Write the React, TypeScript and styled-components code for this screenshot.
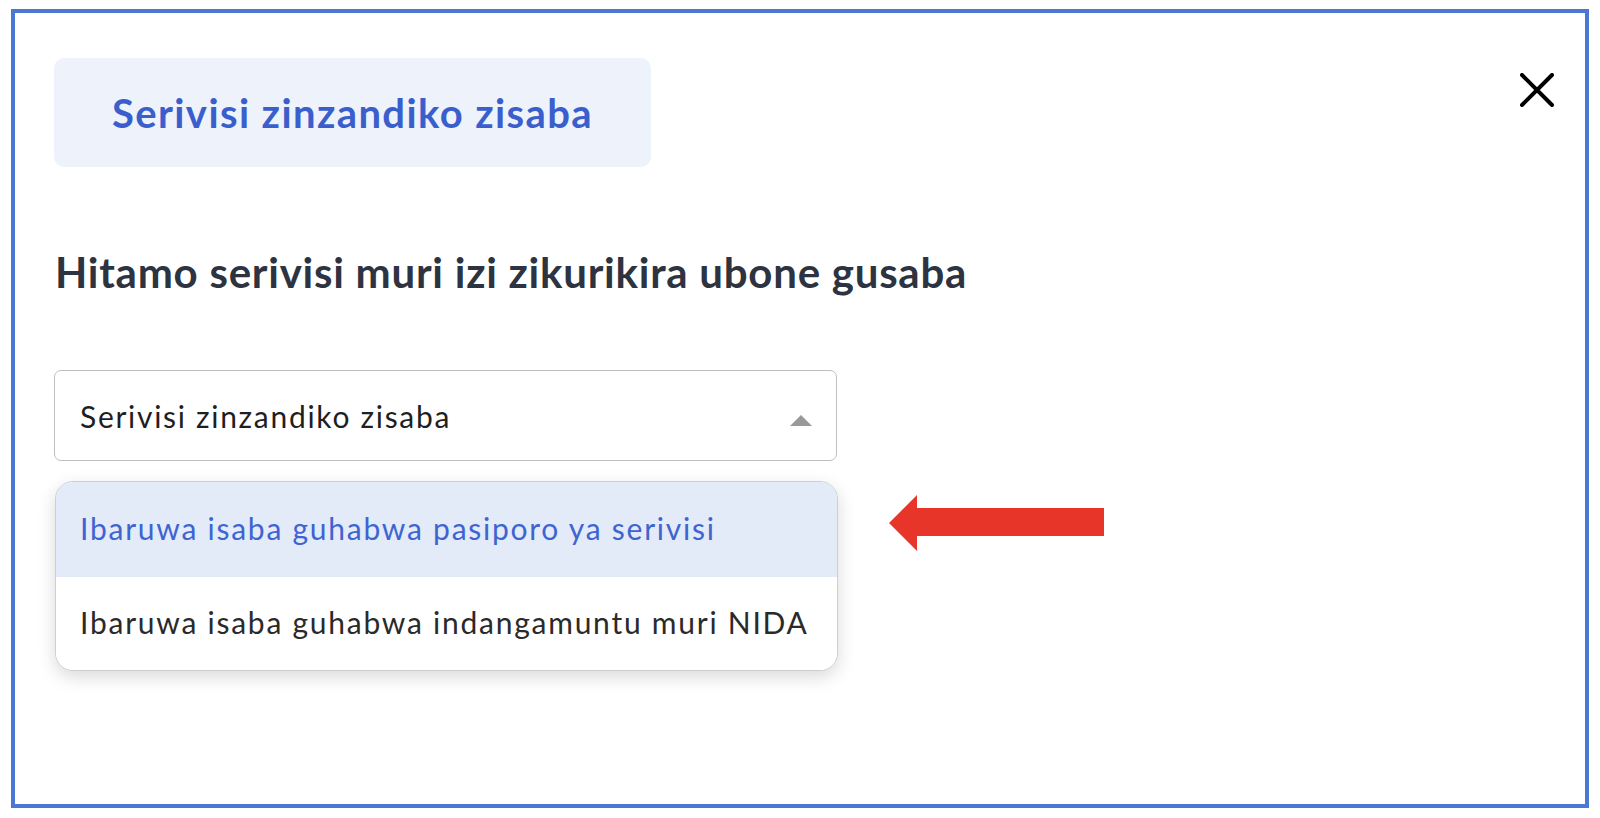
import styled, { createGlobalStyle } from "styled-components";

const GlobalStyle = createGlobalStyle`
  html, body {
    margin: 0;
    padding: 0;
    background: #ffffff;
  }
  body {
    font-family: Lato, "Open Sans", sans-serif;
  }
`;

const Frame = styled.div`
  box-sizing: border-box;
  margin: 9px 11px 0 11px;
  width: 1578px;
  height: 799px;
  border: 4px solid #4a78d4;
  padding: 45px 31px 0 39px;
  display: flex;
  flex-direction: column;
`;

const Header = styled.div`
  display: flex;
  justify-content: space-between;
  align-items: flex-start;
`;

const Tab = styled.div`
  box-sizing: border-box;
  width: 597px;
  height: 109px;
  border-radius: 10px;
  background: #eef2fb;
  display: flex;
  align-items: center;
  justify-content: center;
  color: #3a5fcd;
  font-size: 40px;
  font-weight: 700;
  letter-spacing: 1.4px;
`;

const CloseButton = styled.button`
  margin-top: 15px;
  padding: 0;
  border: none;
  background: none;
  width: 34px;
  height: 34px;
  cursor: pointer;
`;

const Heading = styled.h2`
  margin: 80px 0 0 1px;
  font-size: 42px;
  line-height: 1.2;
  font-weight: 700;
  letter-spacing: 0.75px;
  color: #2d3340;
`;

const Select = styled.div`
  box-sizing: border-box;
  margin-top: 73px;
  width: 783px;
  height: 91px;
  border: 1px solid #bfbfbf;
  border-radius: 7px;
  display: flex;
  align-items: center;
  justify-content: space-between;
  padding: 0 24px 0 25px;
  font-size: 30px;
  letter-spacing: 1.7px;
  color: #1f1f1f;
`;

const Caret = styled.span`
  width: 0;
  height: 0;
  border-left: 11.5px solid transparent;
  border-right: 11.5px solid transparent;
  border-bottom: 11px solid #999999;
  margin-top: 10px;
`;

const MenuRow = styled.div`
  display: flex;
  align-items: flex-start;
  margin-top: 20px;
`;

const Menu = styled.div`
  box-sizing: border-box;
  width: 783px;
  margin-left: 1px;
  border: 1px solid #cfcfcf;
  border-radius: 18px;
  overflow: hidden;
  background: #ffffff;
  box-shadow: 0 6px 18px rgba(0, 0, 0, 0.15);
`;

const Option = styled.div<{ $active?: boolean; $height: number }>`
  box-sizing: border-box;
  height: ${(p) => p.$height}px;
  display: flex;
  align-items: center;
  padding: 0 0 4px 24px;
  font-size: 30px;
  letter-spacing: 1.75px;
  background: ${(p) => (p.$active ? "#e3eaf8" : "#ffffff")};
  color: ${(p) => (p.$active ? "#3e64d2" : "#2a2a2a")};
`;

const Pointer = styled.svg`
  margin: 14px 0 0 51px;
  flex-shrink: 0;
`;

export default function App() {
  return (
    <>
      <GlobalStyle />
      <Frame>
        <Header>
          <Tab>Serivisi zinzandiko zisaba</Tab>
          <CloseButton aria-label="Close">
            <svg width="34" height="34" viewBox="0 0 34 34">
              <path
                d="M2 2 L32 32 M32 2 L2 32"
                stroke="#000"
                strokeWidth="4"
                strokeLinecap="round"
              />
            </svg>
          </CloseButton>
        </Header>
        <Heading>Hitamo serivisi muri izi zikurikira ubone gusaba</Heading>
        <Select>
          <span>Serivisi zinzandiko zisaba</span>
          <Caret />
        </Select>
        <MenuRow>
          <Menu>
            <Option $active $height={95}>
              Ibaruwa isaba guhabwa pasiporo ya serivisi
            </Option>
            <Option $height={93}>
              Ibaruwa isaba guhabwa indangamuntu muri NIDA
            </Option>
          </Menu>
          <Pointer width="216" height="56" viewBox="0 0 216 56">
            <polygon
              points="0,28 28,0 28,13 215,13 215,41 28,41 28,56"
              fill="#e8352a"
            />
          </Pointer>
        </MenuRow>
      </Frame>
    </>
  );
}
